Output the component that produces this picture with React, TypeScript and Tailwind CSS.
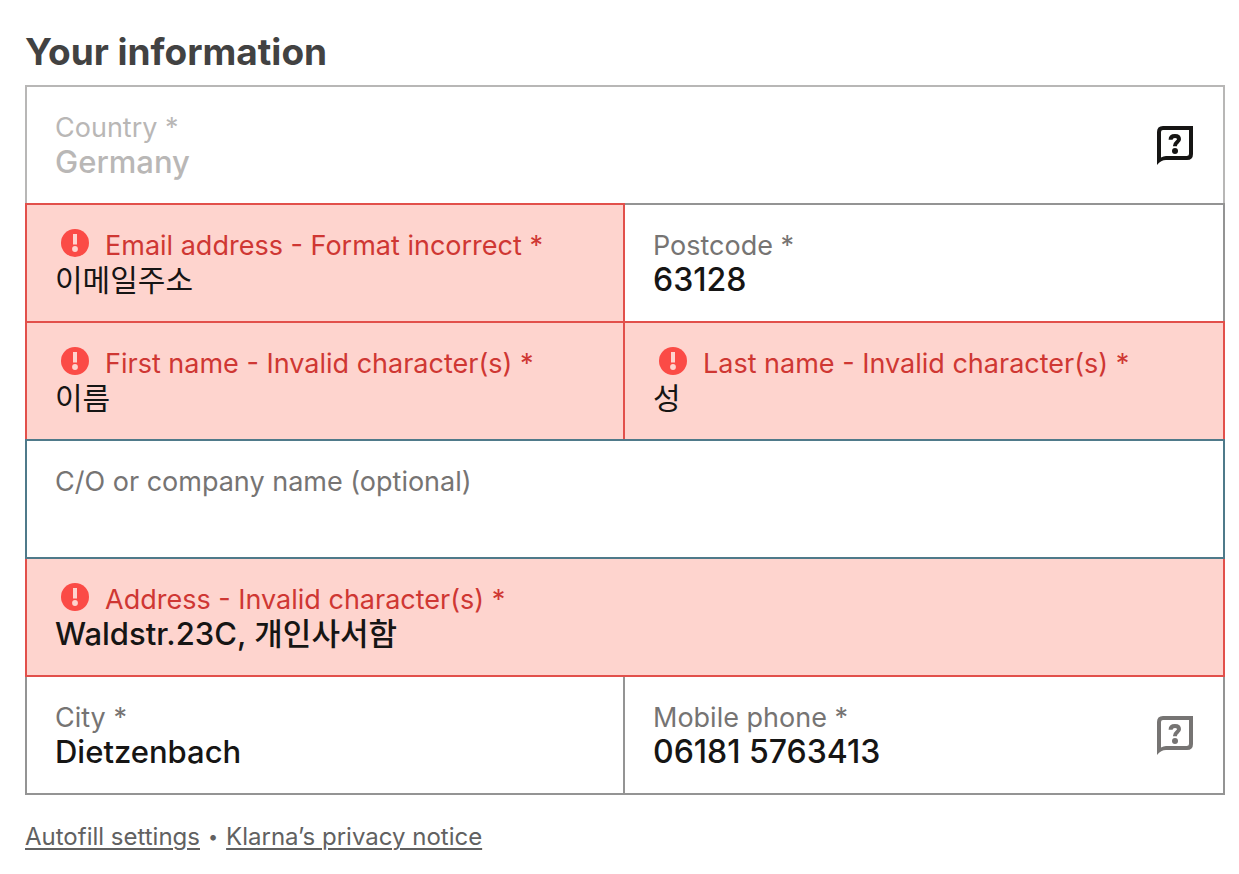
import React, { useState } from "react";
import clsx from "clsx";

type Tone = "default" | "disabled" | "error" | "active";
type Script = "latin" | "digits" | "hangul";

interface Field {
  id: string;
  label: string;
  value: string;
  type?: string;
  tone?: Tone;
  script?: Script;
  wide?: boolean;
  help?: boolean;
}

const fields: Field[] = [
  { id: "country", label: "Country *", value: "Germany", tone: "disabled", wide: true, help: true },
  { id: "email", label: "Email address - Format incorrect *", value: "이메일주소", tone: "error", script: "hangul" },
  { id: "postcode", label: "Postcode *", value: "63128", script: "digits" },
  { id: "firstName", label: "First name - Invalid character(s) *", value: "이름", tone: "error", script: "hangul" },
  { id: "lastName", label: "Last name - Invalid character(s) *", value: "성", tone: "error", script: "hangul" },
  { id: "company", label: "C/O or company name (optional)", value: "", tone: "active", wide: true },
  { id: "address", label: "Address - Invalid character(s) *", value: "Waldstr.23C, 개인사서함", tone: "error", wide: true },
  { id: "city", label: "City *", value: "Dietzenbach" },
  { id: "phone", label: "Mobile phone *", value: "06181 5763413", type: "tel", script: "digits", help: true },
];

// Neighbouring cells share a border, the higher z-index decides its colour
const cellTones: Record<Tone, string> = {
  disabled: "z-0 border-[#b8b7b6] bg-white",
  default: "z-10 border-[#949494] bg-white",
  error: "z-20 border-[#e2504b] bg-[#fed4ce]",
  active: "z-30 border-[#4f7a8a] bg-white",
};

const labelTones: Record<Tone, string> = {
  disabled: "text-[#b9b7b6]",
  default: "text-[#767473]",
  error: "text-[#cf3733]",
  active: "text-[#767473]",
};

const valueStyles: Record<Script, string> = {
  latin: "text-[31px] font-medium",
  digits: "text-[32px] font-medium",
  hangul: "text-[30px] font-normal",
};

function ErrorIcon() {
  return (
    <svg viewBox="0 0 28 28" className="ml-1.5 mr-4 mt-0.5 size-7 shrink-0" aria-hidden="true">
      <circle cx="14" cy="14" r="14" fill="#fb4b46" />
      <path d="M12 5h4v10.5h-4z" fill="#fed4ce" />
      <circle cx="14" cy="20" r="2.9" fill="#fed4ce" />
    </svg>
  );
}

function HelpIcon() {
  return (
    <svg viewBox="0 0 36 39" className="h-[39px] w-9" fill="none" aria-hidden="true">
      <path
        fillRule="evenodd"
        fill="currentColor"
        d="M6 0H36V28Q36 34 30 34H9Q4 34 0 39V6Q0 0 6 0ZM6 4Q4 4 4 6V31.5Q6.5 30 9 30H29.5Q32 30 32 27.5V4Z"
      />
      <path
        d="M13.6 13.8C13.6 11.2 15.4 10 17.9 10C20.6 10 22 11.3 22 13.2C22 16.2 17.9 16 17.9 20.3"
        stroke="currentColor"
        strokeWidth="4"
      />
      <circle cx="18" cy="25" r="3" fill="currentColor" />
    </svg>
  );
}

function FormField({ field }: { field: Field }) {
  const [value, setValue] = useState(field.value);
  const tone = field.tone ?? "default";

  return (
    <div
      className={clsx(
        "relative -ml-0.5 -mt-0.5 flex h-[120px] items-center border-2 pl-7 pr-[30px]",
        cellTones[tone],
        field.wide && "col-span-2"
      )}
    >
      <div className="min-w-0 flex-1">
        <div className="flex h-[38px] items-start">
          {tone === "error" && <ErrorIcon />}
          <label htmlFor={field.id} className={clsx("whitespace-nowrap text-[27px] leading-[38px]", labelTones[tone])}>
            {field.label}
          </label>
        </div>
        <input
          id={field.id}
          type={field.type ?? "text"}
          value={value}
          disabled={tone === "disabled"}
          aria-invalid={tone === "error"}
          onChange={(e) => setValue(e.target.value)}
          className={clsx(
            "-mt-1 block h-[38px] w-full bg-transparent text-[#161514] outline-none disabled:text-[#b9b7b6]",
            valueStyles[field.script ?? "latin"]
          )}
        />
      </div>
      {field.help && (
        <button
          type="button"
          aria-label={`Help for ${field.id}`}
          className={tone === "disabled" ? "text-[#161514]" : "text-[#767473]"}
        >
          <HelpIcon />
        </button>
      )}
    </div>
  );
}

export default function App() {
  return (
    <main className="min-h-screen bg-white pb-5 pl-[25px] pr-3.5 pt-7 font-['Inter','Noto_Sans_CJK_KR',sans-serif]">
      <h1 className="text-[37px] font-bold leading-12 text-[#424242]">Your information</h1>
      <form className="mt-[9px]">
        <div className="grid grid-cols-[calc(50%-1px)_1fr] pl-0.5 pt-0.5">
          {fields.map((field) => (
            <FormField key={field.id} field={field} />
          ))}
        </div>
      </form>
      <p className="mt-6 flex items-center gap-2 text-2xl leading-9 text-[#616161]">
        <a href="#autofill" className="underline decoration-2 underline-offset-3">
          Autofill settings
        </a>
        <span className="text-lg">•</span>
        <a href="#privacy" className="underline decoration-2 underline-offset-3">
          Klarna’s privacy notice
        </a>
      </p>
    </main>
  );
}
